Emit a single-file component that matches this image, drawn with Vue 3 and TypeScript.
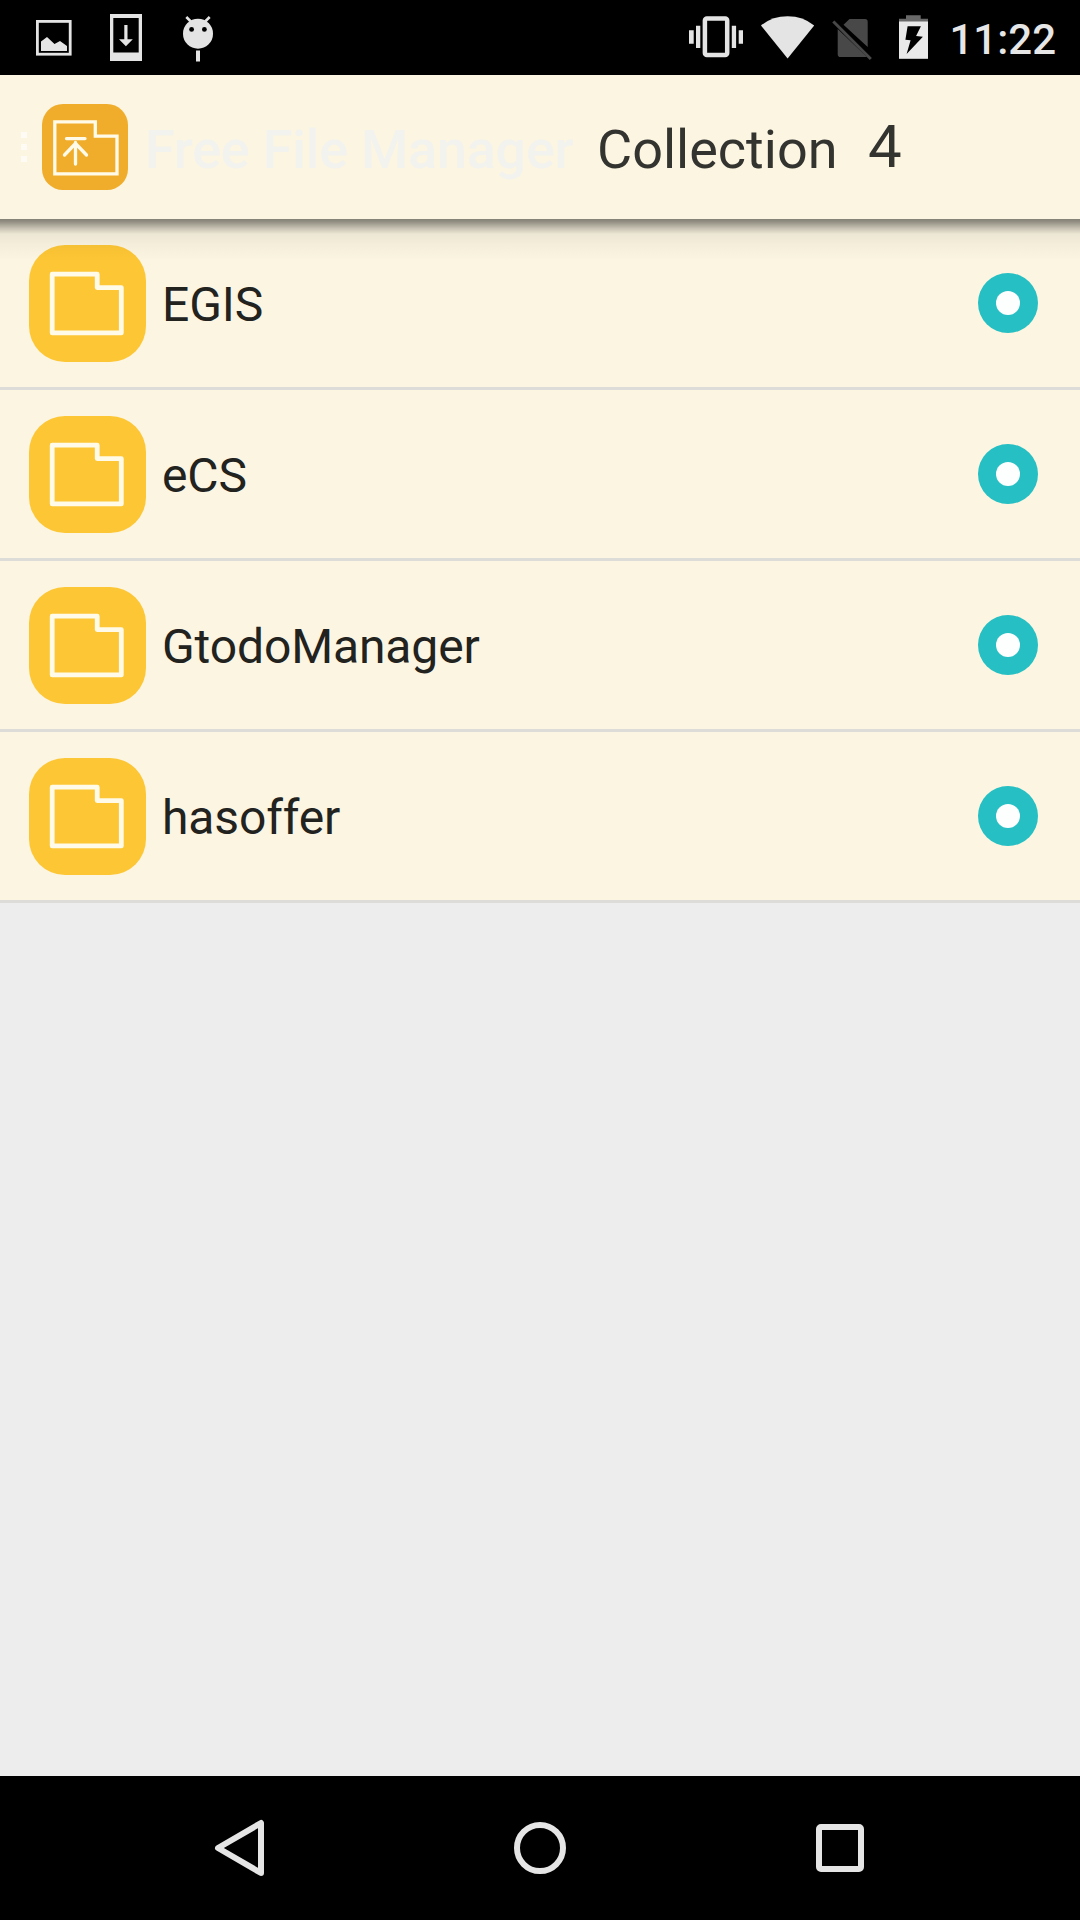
<script setup lang="ts">
interface Entry {
  name: string
  selected: boolean
}

const title: string = 'Free File Manager'
const entries: Entry[] = [
  { name: 'EGIS', selected: true },
  { name: 'eCS', selected: true },
  { name: 'GtodoManager', selected: true },
  { name: 'hasoffer', selected: true },
]
</script>

<template>
  <div class="screen">
    <div class="status">
      <div class="notifications">
        <svg width="36" height="75" viewBox="36 0 36 75">
          <rect x="37.4" y="21.4" width="32.8" height="32.8" fill="none" stroke="#e4e4e4" stroke-width="2.8" />
          <path d="M41 41.5l6-4.5 7.5 7 5.5-3 7 5v5H41z" fill="#e4e4e4" />
        </svg>
        <svg class="download" width="32" height="75" viewBox="110 0 32 75">
          <path fill="#e4e4e4" fill-rule="evenodd" d="M110 14h32v47h-32zM113.3 18v34.5h25.4V18z" />
          <path fill="#e4e4e4" d="M124.3 25h3.2v14.3h5.3l-6.9 7-6.9-7h5.3z" />
        </svg>
        <svg width="32" height="75" viewBox="182 0 32 75">
          <circle cx="198" cy="33.7" r="15" fill="#e4e4e4" />
          <path d="M186.3 17l5 5M209.7 17l-5 5" stroke="#e4e4e4" stroke-width="2.6" />
          <circle cx="191.6" cy="29.4" r="2.4" />
          <circle cx="204.4" cy="29.4" r="2.4" />
          <rect x="196" y="50.5" width="4" height="11" fill="#e4e4e4" />
        </svg>
      </div>
      <div class="indicators">
        <svg class="vibrate" width="54" height="75" viewBox="689 0 54 75" fill="#e4e4e4">
          <rect x="704.9" y="18.6" width="22.3" height="36.4" rx="2" fill="none" stroke="#e4e4e4" stroke-width="4.5" />
          <path d="M689 30.3h4.7v13.5H689zM696 25.8h4.3V48H696zM731.8 25.8h4.3V48h-4.3zM738.7 30.3h4.3v13.5h-4.3z" />
        </svg>
        <svg class="wifi" width="54" height="75" viewBox="761 0 54 75">
          <path fill="#e4e4e4" d="M761 25.5Q772 16.2 787.6 16.2T814.2 25.500L787.6 58.5z" />
        </svg>
        <svg class="sim" width="40" height="75" viewBox="832 0 40 75">
          <path fill="#484848" d="M849.5 19H865q2.7 0 2.7 2.7V47L843.5 24.800zM837.7 29L867 57H840.5q-2.8 0-2.8-2.800z" />
          <path d="M833.3 21.5l37.5 37.500" stroke="#484848" stroke-width="3" />
        </svg>
        <svg class="battery" width="29" height="75" viewBox="899 0 29 75">
          <path fill="#696969" d="M906 15.3h14.7v3.4H928V22h-29v-3.3h7z" />
          <rect x="899" y="21.5" width="29" height="37.3" fill="#e9e9e9" />
          <path d="M907.6 26.3h13.3l-4.8 9.8 6.8.6-16.3 17.2 4-13.7-5.2-.5z" />
        </svg>
        <span class="clock">11:22</span>
      </div>
    </div>

    <header class="bar">
      <div class="dots"><i></i><i></i><i></i></div>
      <svg class="logo" width="86" height="86" viewBox="0 0 86 86">
        <rect width="86" height="86" rx="21" fill="#f0ad2c" />
        <g fill="none" stroke="#fffbe8" stroke-width="3.3">
          <path d="M12.8 17.9H53.3V32.2H75V69.9H12.8z" />
          <path d="M24.5 34.6H43M33.5 60V38.5M22.5 51L33.5 39.5 44.5 51" stroke-linecap="round" />
        </g>
      </svg>
      <span class="title">{{ title }}</span>
      <span class="section">Collection</span>
      <span class="count">{{ entries.length }}</span>
    </header>

    <main class="content">
      <div v-for="entry in entries" :key="entry.name" class="row">
        <svg width="117" height="117" viewBox="0 0 117 117">
          <rect width="117" height="117" rx="36" fill="#fdc635" />
          <path d="M23.2 29.2H68.2V42.6H92.3V87.9H23.2z" fill="none" stroke="#fffbe8" stroke-width="4.8" stroke-linejoin="round" />
        </svg>
        <span class="name">{{ entry.name }}</span>
        <span class="radio" :class="{ on: entry.selected }"></span>
      </div>
    </main>

    <nav class="nav">
      <svg width="144" height="144" viewBox="168 0 144 144">
        <path d="M218 72L261 47V97z" fill="none" stroke="#e5e5e5" stroke-width="6" stroke-linejoin="round" />
      </svg>
      <svg width="144" height="144" viewBox="468 0 144 144">
        <circle cx="540" cy="72" r="23" fill="none" stroke="#e5e5e5" stroke-width="6" />
      </svg>
      <svg width="144" height="144" viewBox="768 0 144 144">
        <rect x="819" y="51" width="42" height="42" rx="2" fill="none" stroke="#e5e5e5" stroke-width="6" />
      </svg>
    </nav>
  </div>
</template>

<style scoped>
.screen {
  width: 1080px;
  height: 1920px;
  display: flex;
  flex-direction: column;
  overflow: hidden;
  background: #ededed;
  font-family: Roboto, "Liberation Sans", sans-serif;
  white-space: nowrap;
}
svg {
  display: block;
  flex: none;
}
.status {
  height: 75px;
  flex: none;
  display: flex;
  justify-content: space-between;
  background: #000;
}
.notifications {
  display: flex;
  padding-left: 36px;
}
.download {
  margin: 0 40px 0 38px;
}
.indicators {
  display: flex;
  padding-right: 24px;
}
.vibrate {
  margin-right: 18px;
}
.wifi {
  margin-right: 17px;
}
.sim {
  margin-right: 27px;
}
.clock {
  width: 128px;
  padding-top: 2px;
  line-height: 75px;
  font-size: 42px;
  font-weight: 500;
  color: #e6e6e6;
  display: flex;
  justify-content: flex-end;
}
.bar {
  position: relative;
  z-index: 1;
  height: 144px;
  flex: none;
  display: flex;
  align-items: center;
  box-sizing: border-box;
  padding-left: 21px;
  background: #fbf5e1;
}
.bar::after {
  content: "";
  position: absolute;
  left: 0;
  right: 0;
  top: 100%;
  height: 42px;
  background: linear-gradient(rgba(0, 0, 0, 0.48), rgba(0, 0, 0, 0.41) 3px, rgba(0, 0, 0, 0.22) 9px, rgba(0, 0, 0, 0.06) 15px, rgba(0, 0, 0, 0.03) 25px, transparent);
}
.dots {
  width: 21px;
  display: flex;
  flex-direction: column;
  gap: 6px;
}
.dots i {
  width: 6px;
  height: 6px;
  background: #fdfbf4;
}
.logo {
  margin-right: 17px;
}
.title {
  width: 455px;
  padding-top: 4px;
  font-size: 54px;
  font-weight: 500;
  letter-spacing: -0.25px;
  color: #f2f2ef;
}
.section {
  width: 271px;
  margin-left: -3px;
  padding-top: 4px;
  font-size: 54px;
  color: #333330;
}
.count {
  padding-bottom: 2px;
  font-size: 60px;
  color: #333330;
}
.content {
  flex: 1;
}
.row {
  height: 171px;
  box-sizing: border-box;
  display: flex;
  align-items: center;
  padding: 0 42px 0 29px;
  border-bottom: 3px solid #dedcd8;
  background: #fbf5e1;
}
.name {
  flex: 1;
  margin-left: 16px;
  padding-top: 2px;
  font-size: 48px;
  letter-spacing: -0.12px;
  color: #22221f;
}
.radio {
  width: 60px;
  height: 60px;
  border-radius: 50%;
  background: #bbb;
  display: flex;
  align-items: center;
  justify-content: center;
}
.radio.on {
  background: #26bfc3;
}
.radio::before {
  content: "";
  width: 24px;
  height: 24px;
  border-radius: 50%;
  background: #fdffff;
}
.nav {
  height: 144px;
  flex: none;
  display: flex;
  justify-content: center;
  gap: 156px;
  background: #000;
}
</style>
